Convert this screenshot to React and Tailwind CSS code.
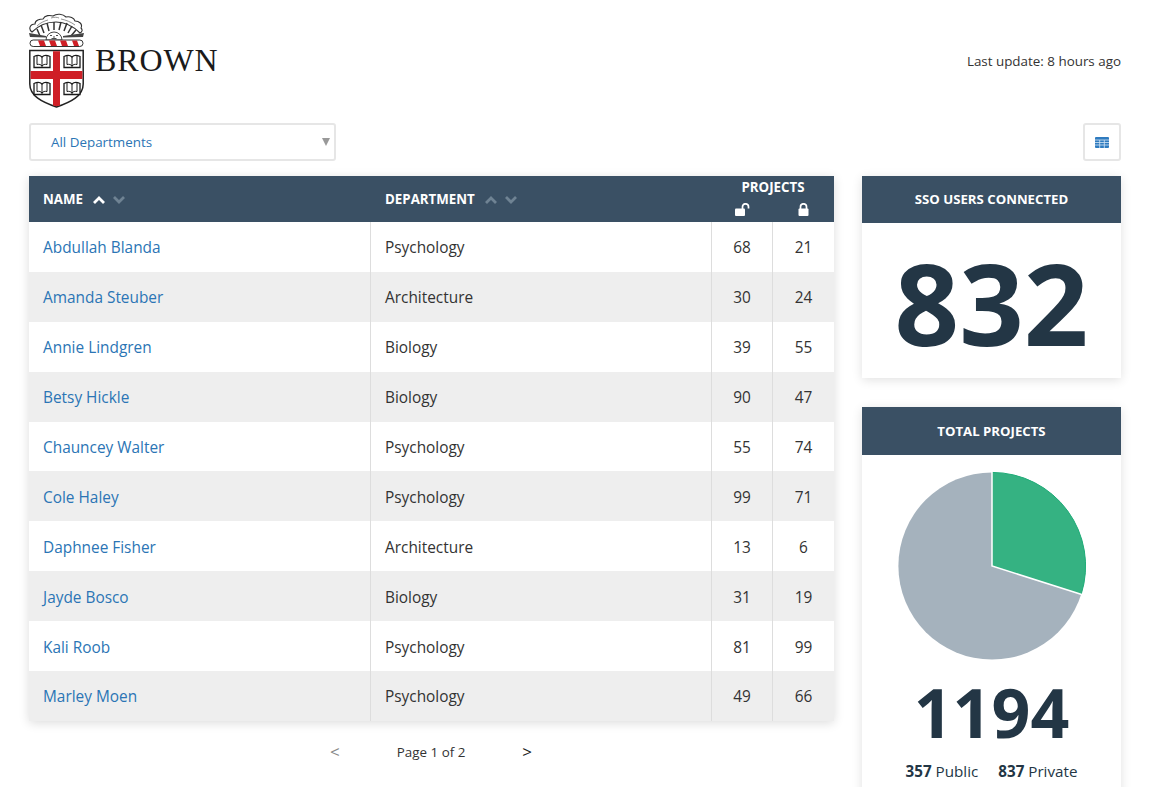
const rows = [
  ['Abdullah Blanda', 'Psychology', 68, 21],
  ['Amanda Steuber', 'Architecture', 30, 24],
  ['Annie Lindgren', 'Biology', 39, 55],
  ['Betsy Hickle', 'Biology', 90, 47],
  ['Chauncey Walter', 'Psychology', 55, 74],
  ['Cole Haley', 'Psychology', 99, 71],
  ['Daphnee Fisher', 'Architecture', 13, 6],
  ['Jayde Bosco', 'Biology', 31, 19],
  ['Kali Roob', 'Psychology', 81, 99],
  ['Marley Moen', 'Psychology', 49, 66],
]

function Book({ x, y }) {
  return (
    <g transform={`translate(${x} ${y})`} fill="none" stroke="#1a1a1a" strokeWidth="1.3">
      <path d="M0 1.5 C3 0 6 0 8 2 C10 0 13 0 16 1.5 V12.5 H0 Z" fill="#fff" />
      <path d="M8 2 V12.5 M3 1 V9.5 C5 9 7 9.5 8 11 C9 9.5 11 9 13 9.5 V1" strokeWidth="1" />
    </g>
  )
}

function Logo() {
  return (
    <svg width="55" height="95" viewBox="0 0 55 95">
      {/* cloud */}
      <path d="M3 19 C-1 16 1 11 6 11 C6 7 11 6 14 6 C16 2 21 2 24 3 C28 0 34 1 37 4 C41 3 45 5 46 8 C50 8 54 11 52 15 C54 17 53 19 51 20 C45 14 36 9 27 9 C17 9 9 13 3 19 Z" fill="#fff" stroke="#333" strokeWidth="1.1" />
      <path d="M8 13 C11 10 15 8 19 7 M32 6 C37 7 42 9 46 12 M22 5 C25 4 28 4 30 5" fill="none" stroke="#777" strokeWidth=".8" />
      {/* sun */}
      <path d="M11 23 L8 16 M15 20 L12 12 M20 18 L18 10 M25 17 L25 9 M30 17 L32 9 M35 18 L38 10 M39 20 L43 13 M42 23 L47 17" stroke="#333" strokeWidth="1.5" />
      <path d="M17 27 A8 8 0 0 1 33 27 Z" fill="#fff" stroke="#333" strokeWidth=".9" />
      <path d="M21 22.5 h2 M27 22.5 h2 M25 23 v2 M22.5 25.5 h5" stroke="#222" strokeWidth=".8" />
      <path d="M0 20 L17 23 L17 24.5 L1 24 Z M55 20 L34 23 L34 24.5 L54 24 Z" fill="#444" />
      {/* wreath */}
      <rect x="1" y="27" width="53" height="6.5" rx="3.2" fill="#fff" stroke="#333" strokeWidth="1" />
      <path d="M9 27.5 h6 l2 5.5 h-6 Z M20 27.5 h6 l2 5.5 h-6 Z M31 27.5 h6 l2 5.5 h-6 Z M43 27.5 h5 l2 5.5 h-5 Z" fill="#cf1f26" />
      {/* shield */}
      <path d="M.8 37.5 H54.2 V71 C54.2 83 42 89 27.5 94 C13 89 .8 83 .8 71 Z" fill="#fff" stroke="#222" strokeWidth="1.5" />
      <path d="M24 38.3 H31 V58 H53.4 V66 H31 V92.6 L27.5 93.2 L24 92.6 V66 H1.6 V58 H24 Z" fill="#cf1f26" />
      <Book x={5} y={42} />
      <Book x={35} y={42} />
      <Book x={5} y={69} />
      <Book x={35} y={69} />
    </svg>
  )
}

function Chevron({ up, active }) {
  return (
    <svg width="12" height="8" viewBox="0 0 12 8" fill="none" stroke={active ? '#fff' : '#6f8393'} strokeWidth="2.8">
      <path d={up ? 'M1 7 L6 2 L11 7' : 'M1 1 L6 6 L11 1'} />
    </svg>
  )
}

function SortArrows({ active }) {
  return (
    <span className="flex items-center gap-[8px]">
      <Chevron up active={active} />
      <Chevron />
    </span>
  )
}

function OpenLock() {
  return (
    <svg width="15" height="13" viewBox="0 0 15 13" fill="#fff">
      <rect x="0" y="5.5" width="10" height="7.5" rx="1" />
      <path d="M7.5 6 V3.8 A3 3 0 0 1 13.5 3.8 V5.5" fill="none" stroke="#fff" strokeWidth="1.7" />
    </svg>
  )
}

function ClosedLock() {
  return (
    <svg width="11" height="13" viewBox="0 0 11 13" fill="#fff">
      <rect x="0.5" y="5.5" width="10" height="7.5" rx="1" />
      <path d="M2.5 6 V3.8 A3 3 0 0 1 8.5 3.8 V6" fill="none" stroke="#fff" strokeWidth="1.7" />
    </svg>
  )
}

function PanelTitle({ children }) {
  return (
    <div className="h-[47px] bg-[#3a5064] flex items-center justify-center text-white text-[13.2px] font-bold uppercase">
      {children}
    </div>
  )
}

export default function App() {
  return (
    <div className="h-[787px] overflow-hidden bg-white px-[29px] font-['Open_Sans',sans-serif] text-[#333]">
      <header className="h-[122px] pt-[13px] flex justify-between items-start">
        <div className="flex items-start gap-[11px]">
          <Logo />
          <span className="mt-[28px] font-['Liberation_Serif',serif] text-[32px] leading-[38px] tracking-[0.9px] text-[#1a1a1a]">BROWN</span>
        </div>
        <span className="mt-[38px] text-[13.4px] leading-5">Last update: 8 hours ago</span>
      </header>

      <div className="flex justify-between h-[38px] mt-px">
        <div className="w-[307px] border-2 border-[#e6e6e6] rounded-[3px] flex items-center justify-between pl-[20px] pr-[4px] text-[13.4px] text-[#2b75b5]">
          <span>All Departments</span>
          <span className="w-0 h-0 border-x-[4px] border-x-transparent border-t-[8px] border-t-[#999]" />
        </div>
        <div className="w-[38px] border-2 border-[#e6e6e6] rounded-[3px] flex items-center justify-center">
          <svg width="14" height="11" viewBox="0 0 14 11">
            <rect width="14" height="11" rx="1" fill="#2f7bbf" />
            <path d="M0 3 H14 M0 5.5 H14 M0 8 H14 M4.7 3 V11 M9.3 3 V11" stroke="#d5e6f5" strokeWidth=".8" />
          </svg>
        </div>
      </div>

      <div className="flex justify-between mt-[15px] items-start">
        <div className="w-[805px]">
          <div className="shadow-[0_2px_10px_rgba(0,0,0,0.14)]">
            <div className="h-[46px] bg-[#3a5064] grid grid-cols-[342px_341px_61px_61px] text-white text-[13.3px] font-bold">
              <div className="flex items-center gap-[10px] pl-[14px] pt-[2px]">NAME <SortArrows active /></div>
              <div className="flex items-center gap-[10px] pl-[14px] pt-[2px]">DEPARTMENT <SortArrows /></div>
              <div className="col-span-2 flex flex-col items-center">
                <span className="text-[13.3px] leading-[18px] pt-[2px]">PROJECTS</span>
                <div className="grid grid-cols-2 w-full justify-items-center items-end mt-[7px]">
                  <OpenLock />
                  <ClosedLock />
                </div>
              </div>
            </div>
            {rows.map((r, i) => (
              <div key={r[0]} className={`h-[49.9px] grid grid-cols-[342px_341px_61px_61px] text-[15.4px] items-stretch ${i % 2 ? 'bg-[#eeeeee]' : 'bg-white'}`}>
                <a href="#" className="flex items-center pl-[14px] pt-[2px] text-[#2b75b5] border-r border-[#dddddd]">{r[0]}</a>
                <div className="flex items-center pl-[14px] pt-[2px] border-r border-[#dddddd]">{r[1]}</div>
                <div className="flex items-center justify-center pt-[2px] border-r border-[#dddddd]">{r[2]}</div>
                <div className="flex items-center justify-center pt-[2px]">{r[3]}</div>
              </div>
            ))}
          </div>
          <div className="flex items-center mt-[21px] text-[13.4px] leading-5 pl-[301px]">
            <span className="text-[#888] text-[17px]">&lt;</span>
            <span className="ml-[57px]">Page 1 of 2</span>
            <span className="ml-[57px] text-[#222] text-[17px]">&gt;</span>
          </div>
        </div>

        <div className="w-[259px] flex flex-col gap-[29px]">
          <section className="shadow-[0_2px_10px_rgba(0,0,0,0.12)]">
            <PanelTitle>SSO Users Connected</PanelTitle>
            <div className="h-[155px] pt-[3px] flex items-center justify-center text-[#233645] font-bold text-[113px] leading-none">832</div>
          </section>
          <section className="shadow-[0_2px_10px_rgba(0,0,0,0.12)]">
            <div className="pt-px bg-[#3a5064]">
              <PanelTitle>Total Projects</PanelTitle>
            </div>
            <div className="flex flex-col items-center pt-[16px] pb-[30px]">
              <svg width="190" height="190" viewBox="0 0 190 190">
                <circle cx="95" cy="95" r="93.6" fill="#a5b2bd" />
                <path d="M95 95 L95 1.4 A93.6 93.6 0 0 1 184.2 123.3 Z" fill="#35b282" />
                <path d="M95 1.4 A93.6 93.6 0 0 1 184.2 123.3" fill="none" stroke="#1fae78" strokeWidth="1" />
                <path d="M95 0 L95 95 L185.5 123.7" fill="none" stroke="#fff" strokeWidth="1.5" />
              </svg>
              <div className="text-[#233645] font-bold text-[68px] leading-[80px] mt-[11px]">1194</div>
              <div className="mt-[8px] text-[15.2px] text-[#233645] flex gap-[20px] leading-[22px]">
                <span><b>357</b> Public</span>
                <span><b>837</b> Private</span>
              </div>
            </div>
          </section>
        </div>
      </div>
    </div>
  )
}
